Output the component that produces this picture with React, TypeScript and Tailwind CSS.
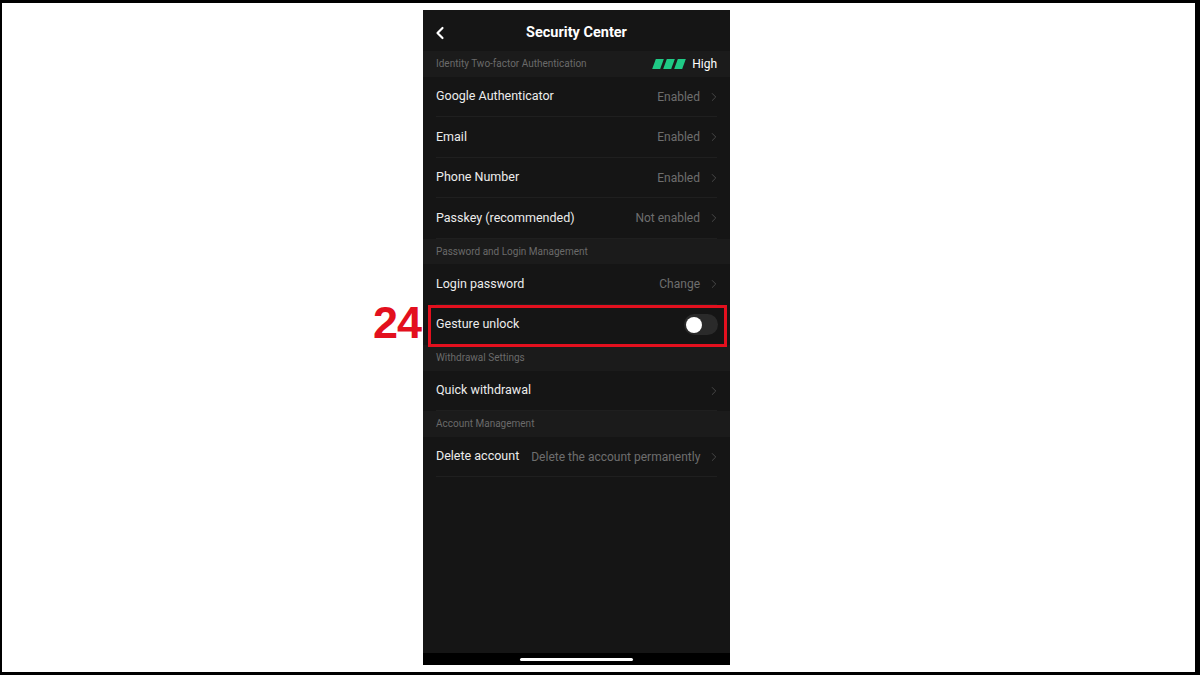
import { ChevronLeft, ChevronRight } from "lucide-react";

type Row = { label: string; value?: string; toggle?: boolean };

const sections: { title: string; right?: boolean; rows: Row[] }[] = [
  {
    title: "Identity Two-factor Authentication",
    right: true,
    rows: [
      { label: "Google Authenticator", value: "Enabled" },
      { label: "Email", value: "Enabled" },
      { label: "Phone Number", value: "Enabled" },
      { label: "Passkey (recommended)", value: "Not enabled" },
    ],
  },
  {
    title: "Password and Login Management",
    rows: [
      { label: "Login password", value: "Change" },
      { label: "Gesture unlock", toggle: true },
    ],
  },
  {
    title: "Withdrawal Settings",
    rows: [{ label: "Quick withdrawal", value: "" }],
  },
  {
    title: "Account Management",
    rows: [{ label: "Delete account", value: "Delete the account permanently" }],
  },
];

function SettingRow({ row }: { row: Row }) {
  return (
    <div className="flex h-[40.5px] items-center pl-[13px] pr-[13px]">
      <div className="flex h-full min-w-0 flex-1 items-center justify-between gap-3 border-b border-[#1f1f1f] pt-[1px] whitespace-nowrap">
        <span className="text-[12.5px] text-[#ececec]">{row.label}</span>
        {row.toggle ? (
          <div className="-mr-[1px] flex h-[21px] w-[34px] items-center rounded-full bg-[#2a2a2a] px-[2px]">
            <div className="h-[16px] w-[16px] rounded-full bg-white" />
          </div>
        ) : (
          <div className="flex items-center gap-[7px] text-[12px] text-[#6e6e6e]">
            <span>{row.value}</span>
            <ChevronRight size={14} strokeWidth={1.6} className="-mr-[4px] text-[#4a4a4a]" />
          </div>
        )}
      </div>
    </div>
  );
}

export default function App() {
  return (
    <div
      className="relative h-[675px] w-[1200px] overflow-hidden border-t-[3px] border-r-[5px] border-b-[3px] border-l-[2px] border-black bg-white"
      style={{ fontFamily: 'Roboto, "Noto Sans", sans-serif' }}
    >
      <div className="ml-[421px] mt-[7px] flex h-[655px] w-[307px] flex-col bg-[#151515]">
        <div className="relative flex h-[41px] items-center justify-center pt-[5px]">
          <ChevronLeft size={20} strokeWidth={2.6} className="absolute left-[7px] top-[13px] text-white" />
          <span className="text-[14.5px] font-bold text-white">Security Center</span>
        </div>

        {sections.map((s) => (
          <div key={s.title}>
            <div className="flex h-[25.5px] items-center justify-between bg-[#1b1b1b] px-[13px]">
              <span className="text-[10px] text-[#6a6a6a]">{s.title}</span>
              {s.right && (
                <div className="flex items-center gap-[8px]">
                  <div className="flex gap-[3px]">
                    {[0, 1, 2].map((i) => (
                      <div key={i} className="h-[10px] w-[8px] -skew-x-[20deg] bg-[#1fc985]" />
                    ))}
                  </div>
                  <span className="text-[12px] text-white">High</span>
                </div>
              )}
            </div>
            {s.rows.map((r) => (
              <SettingRow key={r.label} row={r} />
            ))}
          </div>
        ))}

        <div className="flex-1" />
        <div className="flex h-[12px] items-center justify-center bg-black">
          <div className="h-[3px] w-[113px] rounded-full bg-white" />
        </div>
      </div>

      <div className="absolute left-[426px] top-[302px] h-[42px] w-[299px] border-[3px] border-[#e3101e]" />
      <span
        className="absolute left-[371px] top-[297px] text-[45px] font-bold leading-none tracking-[-1px] text-[#e3101e]"
        style={{ fontFamily: '"Liberation Sans", Arial, sans-serif' }}
      >
        24
      </span>
    </div>
  );
}
